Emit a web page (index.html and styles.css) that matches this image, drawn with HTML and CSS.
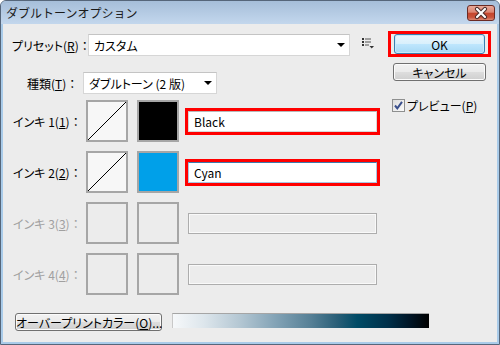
FILE: index.html
```html
<!DOCTYPE html>
<html lang="ja">
<head>
    <meta charset="UTF-8">
    <title>ダブルトーンオプション</title>
    <link rel="stylesheet" href="styles.css">
</head>
<body>
    <div class="window">
        <div class="titlebar">
            <span class="title">ダブルトーンオプション</span>
            <div class="close">
                <svg width="26" height="14" viewBox="0 0 26 14">
                    <path d="M9 3 L17 11 M17 3 L9 11" stroke="#4a2a28" stroke-width="4.2" stroke-linecap="round" />
                    <path d="M9 3 L17 11 M17 3 L9 11" stroke="#ffffff" stroke-width="2.2" stroke-linecap="round" />
                </svg>
            </div>
        </div>

        <div class="dialog">
            <div class="top">
                <div class="main">
                    <div class="row preset-row">
                        <span class="lbl lbl-preset">プリセット(<u>R</u>)<span class="colon">：</span></span>
                        <div class="combo combo-preset"><span>カスタム</span><i class="arrow"></i></div>
                        <svg class="menu-icon" width="12" height="12" viewBox="0 0 12 12">
                            <rect x="0" y="1" width="2" height="2" fill="#333" />
                            <rect x="0" y="4" width="2" height="2" fill="#333" />
                            <rect x="0" y="7" width="2" height="2" fill="#333" />
                            <rect x="3" y="1.5" width="6" height="1" fill="#555" />
                            <rect x="3" y="4.5" width="6" height="1" fill="#555" />
                            <rect x="3" y="7.5" width="4" height="1" fill="#555" />
                            <path d="M7.5 9 L12 9 L9.75 11.5 Z" fill="#333" />
                        </svg>
                    </div>

                    <div class="row type-row">
                        <span class="lbl lbl-type">種類(<u>T</u>)<span class="colon">：</span></span>
                        <div class="combo combo-type"><span>ダブルトーン (2 版)</span><i class="arrow"></i></div>
                    </div>

                    <div class="ink">
                        <span class="lbl lbl-ink">インキ 1(<u>1</u>)<span class="colon">：</span></span>
                        <div class="curve">
                            <svg width="38" height="38" viewBox="0 0 38 38"><line x1="0" y1="38" x2="38" y2="0" stroke="#000" stroke-width="1" /></svg>
                        </div>
                        <div class="swatch swatch-black"></div>
                        <div class="field hl"><div class="input">Black</div></div>
                    </div>

                    <div class="ink">
                        <span class="lbl lbl-ink">インキ 2(<u>2</u>)<span class="colon">：</span></span>
                        <div class="curve">
                            <svg width="38" height="38" viewBox="0 0 38 38"><line x1="0" y1="38" x2="38" y2="0" stroke="#000" stroke-width="1" /></svg>
                        </div>
                        <div class="swatch swatch-cyan"></div>
                        <div class="field hl"><div class="input focus">Cyan</div></div>
                    </div>

                    <div class="ink disabled">
                        <span class="lbl lbl-ink">インキ 3(<u>3</u>)<span class="colon">：</span></span>
                        <div class="curve"></div>
                        <div class="swatch"></div>
                        <div class="field"><div class="input"></div></div>
                    </div>

                    <div class="ink disabled">
                        <span class="lbl lbl-ink">インキ 4(<u>4</u>)<span class="colon">：</span></span>
                        <div class="curve"></div>
                        <div class="swatch"></div>
                        <div class="field"><div class="input"></div></div>
                    </div>
                </div>

                <div class="side">
                    <div class="hl-box"><button class="btn btn-default">OK</button></div>
                    <button class="btn btn-cancel">キャンセル</button>
                    <div class="check-row">
                        <span class="checkbox">
                            <svg width="11" height="11" viewBox="0 0 11 11"><path d="M2 5.5 L4.3 8.3 L9 1.8" fill="none" stroke="#3a4f8c" stroke-width="2" /></svg>
                        </span>
                        <span>プレビュー(<u>P</u>)</span>
                    </div>
                </div>
            </div>

            <div class="bottom">
                <button class="btn btn-overprint">オーバープリントカラー(<u>O</u>)...</button>
                <div class="ramp"></div>
            </div>
        </div>
    </div>
</body>
</html>
```

FILE: styles.css
```css
* {
    box-sizing: border-box;
}
body {
    margin: 0;
    background: #ffffff;
    font-family: "Noto Sans CJK JP", sans-serif;
    font-size: 12px;
    color: #000000;
}
.window {
    width: 500px;
    height: 345px;
    display: flex;
    flex-direction: column;
    border: 1px solid #56667a;
    border-radius: 6px 6px 0 0;
    background: #a9cbe9;
    overflow: hidden;
}
.titlebar {
    height: 23px;
    flex: none;
    display: flex;
    align-items: center;
    justify-content: space-between;
    padding: 0 4px 0 5px;
    background: linear-gradient(#a6bed9, #c3d7ed);
}
.title {
    font-size: 12px;
    color: #1a1a1a;
}
.close {
    width: 28px;
    height: 16px;
    margin-top: 1px;
    display: flex;
    align-items: center;
    justify-content: center;
    border: 1px solid #6b2b24;
    border-radius: 3px;
    background: linear-gradient(#e9a899 0%, #dc8571 45%, #c5452c 50%, #c9523a 80%, #dd8a74 100%);
}
.dialog {
    flex: 1;
    margin: 0 2px 2px;
    padding-top: 7px;
    background: #ececec;
    display: flex;
    flex-direction: column;
    font-feature-settings: "palt";
}
.top {
    display: flex;
    align-items: flex-start;
}
.main {
    width: 385px;
    padding-top: 3px;
}
.row, .ink {
    display: flex;
    align-items: center;
}
.row {
    height: 22px;
}
.type-row {
    margin-top: 16px;
}
.lbl {
    white-space: nowrap;
}
.colon {
    font-feature-settings: normal;
}
.lbl-preset {
    margin-left: 9px;
    width: 76px;
}
.lbl-type {
    margin-left: 24px;
    width: 56px;
}
.lbl-ink {
    margin-left: 10px;
    width: 73px;
}
.combo {
    height: 22px;
    display: flex;
    align-items: center;
    justify-content: space-between;
    padding: 0 4px 0 5px;
    background: #ffffff;
    border: 1px solid #d6d6d6;
    border-top-color: #c4c4c4;
}
.combo-preset {
    width: 262px;
}
.combo-type {
    width: 134px;
}
.arrow {
    width: 0;
    height: 0;
    border-left: 4px solid transparent;
    border-right: 4px solid transparent;
    border-top: 4px solid #000000;
}
.menu-icon {
    margin-left: 12px;
    margin-top: -4px;
}
.ink {
    height: 42px;
    margin-top: 9px;
}
.type-row + .ink {
    margin-top: 6px;
}
.curve, .swatch {
    width: 42px;
    height: 42px;
    border: 2px solid #a6a6a6;
    flex: none;
}
.curve {
    background: #f7f7f7;
}
.curve svg {
    display: block;
}
.swatch {
    margin-left: 9px;
    background: #ececec;
}
.swatch-black {
    background: #000000;
}
.swatch-cyan {
    background: #00a0e9;
}
.field {
    margin-left: 6px;
    border: 3px solid transparent;
}
.field.hl, .hl-box {
    border-color: #ff0000;
}
.input {
    width: 189px;
    height: 21px;
    padding-left: 5px;
    line-height: 19px;
    background: #ffffff;
    border: 1px solid #d8d8d8;
    border-top-color: #b8b8b8;
}
.input.focus {
    border-color: #a9c6e2;
    border-top-color: #3d7bad;
}
.disabled {
    color: #a0a0a0;
}
.disabled .curve {
    background: #ececec;
}
.disabled .input {
    background: #ececec;
    border: 1px solid #adadad;
    box-shadow: inset 0 0 0 1px #f9f9f9;
}
.side {
    width: 103px;
    display: flex;
    flex-direction: column;
}
.hl-box {
    border: 3px solid #ff0000;
    padding: 0 3px;
}
.btn {
    display: block;
    font-family: inherit;
    font-size: 12px;
    font-feature-settings: "palt";
    white-space: nowrap;
    color: #000000;
    padding: 0;
    border: 1px solid #707070;
    border-radius: 3px;
    background: linear-gradient(#f2f2f2 0%, #ebebeb 48%, #dddddd 52%, #cfcfcf 100%);
    box-shadow: inset 0 0 0 1px #fbfbfb;
}
.btn-default {
    width: 91px;
    height: 20px;
    border-color: #3c7fb1;
    background: linear-gradient(#eaf6fd 0%, #d9f0fc 48%, #bee6fd 52%, #a7d9f5 100%);
    box-shadow: inset 0 0 0 1px #c8ebfb;
}
.btn-cancel {
    width: 93px;
    height: 18px;
    margin: 6px 0 0 5px;
    line-height: 15px;
}
.check-row {
    display: flex;
    align-items: center;
    gap: 2px;
    margin: 16px 0 0 4px;
}
.checkbox {
    width: 13px;
    height: 13px;
    display: flex;
    align-items: center;
    justify-content: center;
    border: 1px solid #8e8f8f;
    background: linear-gradient(135deg, #dcdcdc, #fbfbfb);
}
.bottom {
    display: flex;
    align-items: flex-start;
    margin-top: 18px;
}
.btn-overprint {
    width: 147px;
    height: 18px;
    margin-left: 12px;
    line-height: 15px;
}
.ramp {
    width: 257px;
    height: 15px;
    margin-left: 10px;
    border-top: 1px solid #a5a5a5;
    border-left: 1px solid #c8c8c8;
    background: linear-gradient(to right, #f6f8fa 0%, #dde6ec 12%, #b4c7d3 26%, #83a3b6 40%, #557f95 54%, #2a5f78 64%, #004b66 72%, #00304a 84%, #001424 93%, #000000 100%);
}
```
